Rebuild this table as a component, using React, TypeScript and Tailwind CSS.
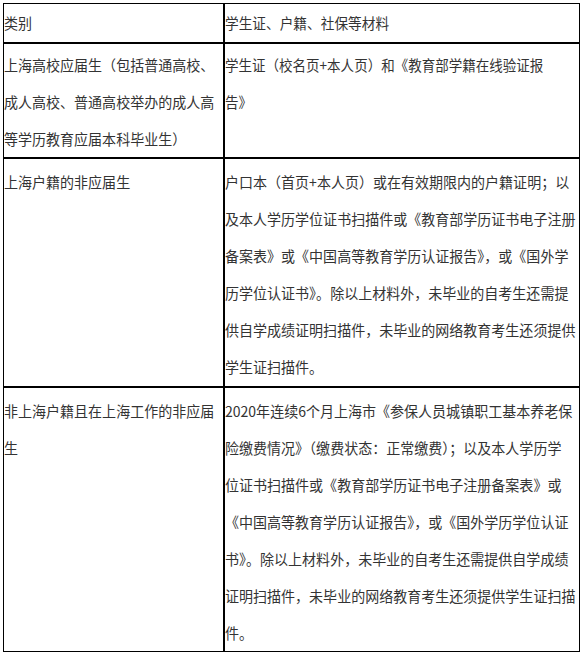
import React from "react";

type Row = {
  left: string[];
  right: React.ReactNode[];
  pad: string;
  rightScale?: string;
};

const rows: Row[] = [
  {
    left: [
      "上海高校应届生（包括普通高校、",
      "成人高校、普通高校举办的成人高",
      "等学历教育应届本科毕业生）",
    ],
    right: ["学生证（校名页+本人页）和《教育部学籍在线验证报", "告》"],
    pad: "pt-[2px]",
    rightScale: "origin-left scale-x-[0.932]",
  },
  {
    left: ["上海户籍的非应届生"],
    right: [
      "户口本（首页+本人页）或在有效期限内的户籍证明；以",
      "及本人学历学位证书扫描件或《教育部学历证书电子注册",
      "备案表》或《中国高等教育学历认证报告》，或《国外学",
      "历学位认证书》。除以上材料外，未毕业的自考生还需提",
      "供自学成绩证明扫描件，未毕业的网络教育考生还须提供",
      "学生证扫描件。",
    ],
    pad: "pt-[4px] pb-[1px]",
  },
  {
    left: ["非上海户籍且在上海工作的非应届", "生"],
    right: [
      "2020年连续6个月上海市《参保人员城镇职工基本养老保",
      "险缴费情况》（缴费状态：正常缴费）；以及本人学历学",
      "位证书扫描件或《教育部学历证书电子注册备案表》或",
      "《中国高等教育学历认证报告》，或《国外学历学位认证",
      "书》。除以上材料外，未毕业的自考生还需提供自学成绩",
      "证明扫描件，未毕业的网络教育考生还须提供学生证扫描",
      "件。",
    ],
    pad: "pt-[4px]",
  },
];

const DEFAULT_SCALE = "origin-left scale-x-[0.9667]";

function Lines({
  lines,
  scale = DEFAULT_SCALE,
}: {
  lines: React.ReactNode[];
  scale?: string;
}) {
  return (
    <div className={scale}>
      {lines.map((l, i) => (
        <div key={i} className="whitespace-nowrap">
          {l}
        </div>
      ))}
    </div>
  );
}

export default function App() {
  return (
    <div className="bg-white pl-[3px] pt-[3px] font-['Noto_Sans_CJK_SC','Noto_Sans',sans-serif] text-[14.5px] leading-[37px] text-[#333333]">
      <div className="grid w-[577px] grid-cols-[221px_356px]">
        <div className="border border-black pb-[1px]">
          <Lines lines={["类别"]} />
        </div>
        <div className="border border-black pb-[1px]">
          <Lines
            lines={["学生证、户籍、社保等材料"]}
            scale="origin-left scale-x-[0.943]"
          />
        </div>
        {rows.map((r, i) => (
          <React.Fragment key={i}>
            <div className={`border border-black ${r.pad}`}>
              <Lines lines={r.left} />
            </div>
            <div className={`border border-black ${r.pad}`}>
              <Lines lines={r.right} scale={r.rightScale} />
            </div>
          </React.Fragment>
        ))}
      </div>
    </div>
  );
}
